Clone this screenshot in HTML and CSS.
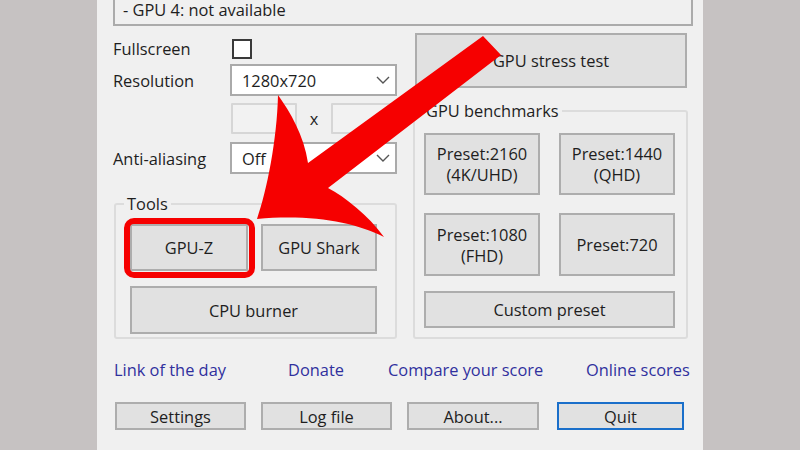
FILE: index.html
```html
<!DOCTYPE html>
<html lang="en">
<head>
    <meta charset="UTF-8">
    <meta name="viewport" content="width=device-width, initial-scale=1.0">
    <title>FurMark</title>
    <link rel="stylesheet" href="styles.css">
</head>
<body>
    <div class="window">
        <!-- lista de GPUs (cortada no topo) -->
        <div class="gpu-list">- GPU 4: not available</div>

        <div class="main">
            <div class="col-left">
                <div class="form-row row-check">
                    <span class="label">Fullscreen</span>
                    <span class="checkbox"></span>
                </div>
                <div class="form-row row-combo">
                    <span class="label">Resolution</span>
                    <div class="combo">
                        <span>1280x720</span>
                        <svg class="chevron" width="14" height="8" viewBox="0 0 14 8"><polyline points="1,1 7,7 13,1" fill="none" stroke="#555" stroke-width="1.4"/></svg>
                    </div>
                </div>
                <div class="form-row row-size">
                    <span></span>
                    <div class="size-inputs">
                        <span class="field"></span>
                        <span class="times">x</span>
                        <span class="field"></span>
                    </div>
                </div>
                <div class="form-row row-combo row-aa">
                    <span class="label">Anti-aliasing</span>
                    <div class="combo">
                        <span>Off</span>
                        <svg class="chevron" width="14" height="8" viewBox="0 0 14 8"><polyline points="1,1 7,7 13,1" fill="none" stroke="#555" stroke-width="1.4"/></svg>
                    </div>
                </div>

                <div class="group tools">
                    <div class="group-title">Tools</div>
                    <div class="tools-grid">
                        <button class="btn btn-gpuz">GPU-Z</button>
                        <button class="btn">GPU Shark</button>
                        <button class="btn btn-span">CPU burner</button>
                    </div>
                </div>
            </div>

            <div class="col-right">
                <button class="btn btn-stress">GPU stress test</button>
                <div class="group bench">
                    <div class="group-title">GPU benchmarks</div>
                    <div class="bench-grid">
                        <button class="btn btn-preset">Preset:2160<br>(4K/UHD)</button>
                        <button class="btn btn-preset">Preset:1440<br>(QHD)</button>
                        <button class="btn btn-preset">Preset:1080<br>(FHD)</button>
                        <button class="btn btn-preset">Preset:720</button>
                    </div>
                    <button class="btn btn-custom">Custom preset</button>
                </div>
            </div>
        </div>

        <div class="links">
            <a href="#">Link of the day</a>
            <a href="#">Donate</a>
            <a href="#">Compare your score</a>
            <a href="#">Online scores</a>
        </div>

        <div class="actions">
            <button class="btn">Settings</button>
            <button class="btn">Log file</button>
            <button class="btn">About...</button>
            <button class="btn btn-quit">Quit</button>
        </div>
    </div>

    <!-- seta vermelha de destaque -->
    <svg class="arrow" width="800" height="450" viewBox="0 0 800 450">
        <path d="M483 36 L501 55 L328 188 C345 197 368 215 384 237 C355 222 310 214 257 219 C267 190 277 140 278 95 C290 112 304 135 308 163 Z" fill="#f60000"/>
    </svg>
</body>
</html>
```

FILE: styles.css
```css
/* Estilos básicos */
body {
    margin: 0;
    width: 800px;
    height: 450px;
    overflow: hidden;
    background-color: #c6c2c2;
    font-family: 'Open Sans', 'Noto Sans', sans-serif;
    font-size: 16.4px;
    color: #1e1e1e;
}

.window {
    margin-left: 97px;
    width: 590px;
    height: 450px;
    padding-left: 16px;
    background-color: #f0f0f0;
}

.gpu-list {
    width: 568px;
    height: 24px;
    padding-left: 8px;
    border: 2px solid #ababab;
    border-top: none;
    line-height: 20px;
}

.main {
    display: flex;
    gap: 16px;
}

.col-left {
    width: 284px;
    padding-top: 11px;
}

.col-right {
    width: 276px;
    padding-top: 7px;
}

/* linhas do formulário */
.form-row {
    display: grid;
    grid-template-columns: 117px 167px;
    align-items: center;
}

.row-check {
    height: 20px;
}

.row-combo {
    height: 32px;
    margin-top: 7px;
}

.row-size {
    height: 30px;
    margin-top: 7px;
}

.row-aa {
    margin-top: 9px;
}

.checkbox {
    width: 16px;
    height: 16px;
    margin-left: 2px;
    border: 2px solid #3a3a3a;
    background-color: #fff;
}

.combo {
    height: 28px;
    display: flex;
    align-items: center;
    justify-content: space-between;
    padding: 0 5px 0 10px;
    border: 2px solid #aaa;
    background-color: #fff;
}

.size-inputs {
    display: flex;
    align-items: center;
    margin-left: 1px;
}

.field {
    width: 62px;
    height: 27px;
    border: 2px solid #d6d6d6;
    border-radius: 1px;
    background-color: #f2f2f2;
}

.times {
    width: 35px;
    text-align: center;
}

/* grupos */
.group {
    border: 2px solid #dcdcdc;
    border-radius: 3px;
}

.group-title {
    display: table;
    margin: -10px 0 0 8px;
    padding: 0 3px;
    line-height: 18px;
    background-color: #f0f0f0;
}

.tools {
    height: 132px;
    margin: 29px 0 0 1px;
}

.tools-grid {
    display: grid;
    grid-template-columns: 118px 116px;
    grid-template-rows: 47px 48px;
    column-gap: 13px;
    row-gap: 15px;
    margin: 11px 0 0 14px;
}

.bench {
    width: 271px;
    height: 225px;
    margin-top: 22px;
}

.bench-grid {
    display: grid;
    grid-template-columns: 116px 116px;
    grid-template-rows: 62px 63px;
    column-gap: 19px;
    row-gap: 18px;
    margin: 13px 0 0 9px;
}

/* botões */
.btn {
    font-family: inherit;
    font-size: 16.4px;
    color: #1e1e1e;
    background-color: #e1e1e1;
    border: 2px solid #adadad;
    padding: 0;
    line-height: 21px;
}

.btn-span {
    grid-column: 1 / 3;
}

.btn-gpuz {
    position: relative;
}

.btn-gpuz::after {
    content: '';
    position: absolute;
    top: -8px;
    left: -8px;
    right: -9px;
    bottom: -9px;
    border: 6px solid #f60000;
    border-radius: 10px;
}

.btn-stress {
    display: block;
    width: 272px;
    height: 55px;
    margin-left: 2px;
}

.btn-custom {
    display: block;
    width: 251px;
    height: 37px;
    margin: 15px 0 0 9px;
}

.btn-quit {
    border-color: #1a6fca;
}

/* links */
.links {
    display: grid;
    grid-template-columns: 174px 100px 198px auto;
    height: 20px;
    margin: 21px 0 0 1px;
    line-height: 20px;
}

.links a {
    color: #30309e;
    text-decoration: none;
}

.actions {
    display: grid;
    grid-template-columns: 131px 131px 132px 130px;
    column-gap: 15px;
    height: 28px;
    margin: 22px 0 0 2px;
}

.actions .btn-quit {
    margin-left: 3px;
}

/* seta */
.arrow {
    position: absolute;
    top: 0;
    left: 0;
    pointer-events: none;
}
```
